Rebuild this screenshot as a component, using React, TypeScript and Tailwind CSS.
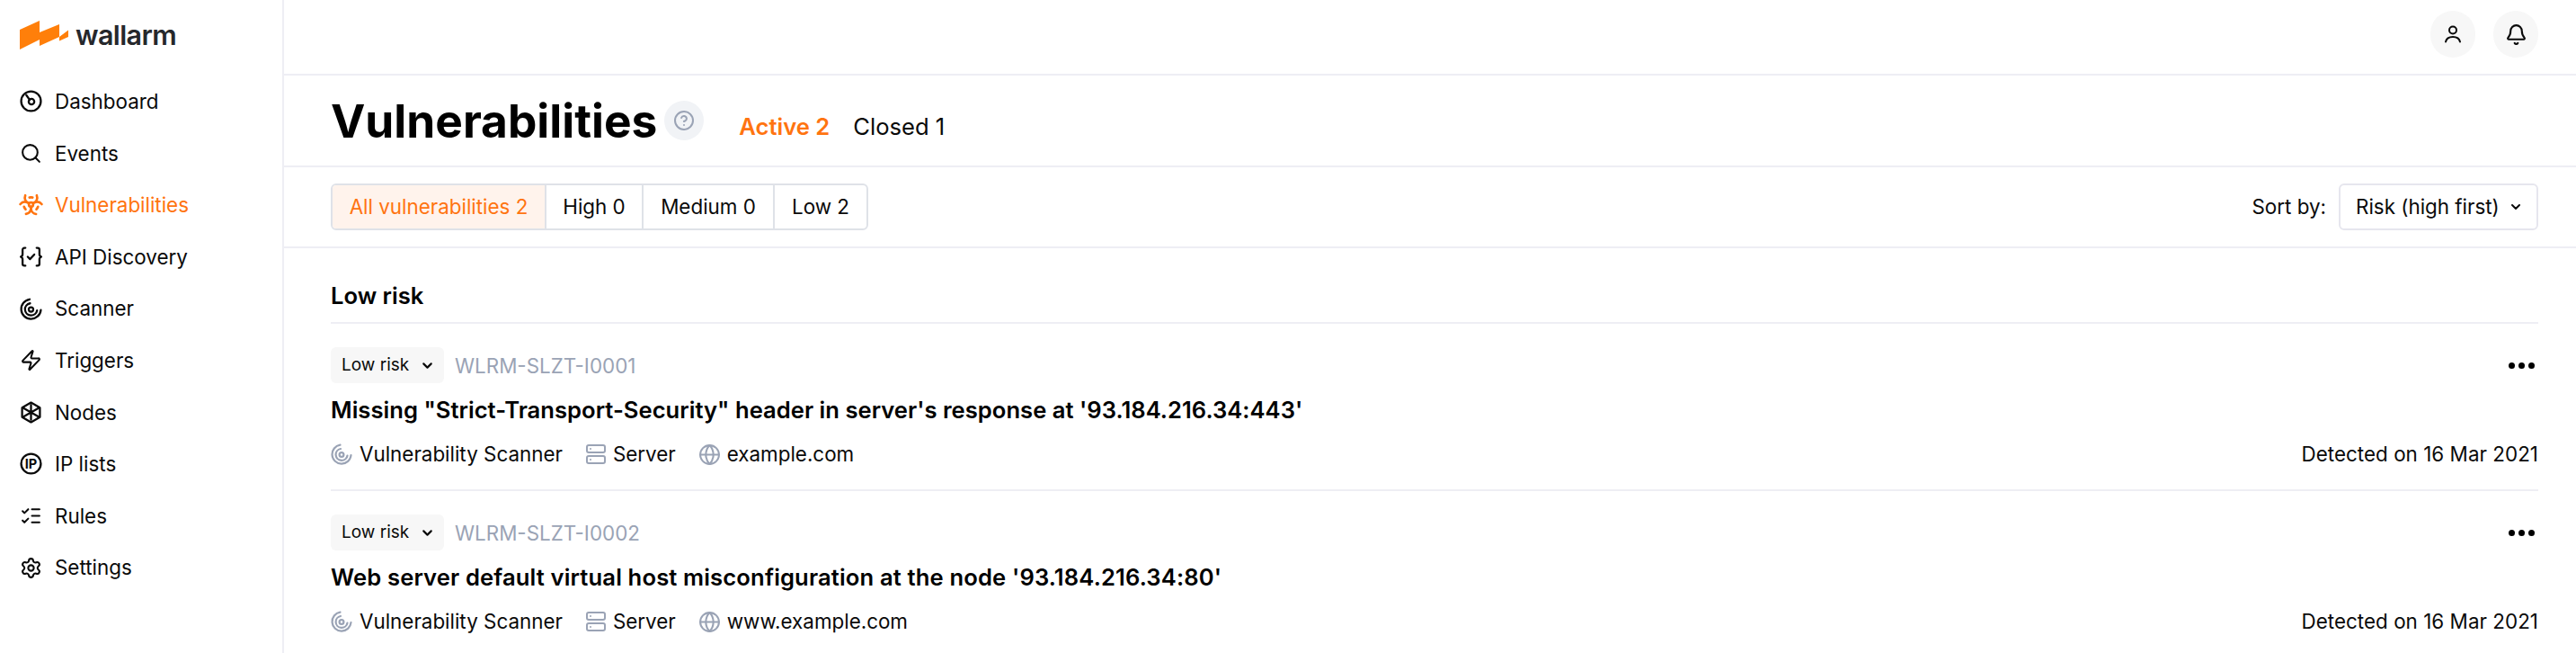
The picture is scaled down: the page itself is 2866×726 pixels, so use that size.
import React from "react";
import { Search, Biohazard, Zap, ListChecks, Settings, Bell, Server, Globe, CircleHelp, ChevronDown } from "lucide-react";

type P = { className?: string };
const base = { viewBox: "0 0 24 24", fill: "none", stroke: "currentColor", strokeWidth: 2, strokeLinecap: "round" as const, strokeLinejoin: "round" as const };

const Gauge = ({ className }: P) => (
  <svg {...base} strokeWidth={2.2} className={className}>
    <circle cx="12" cy="12" r="10.5" />
    <circle cx="12.5" cy="12.5" r="3" />
    <path d="M10.5 10.5 7 5.5" />
  </svg>
);
const ApiIcon = ({ className }: P) => (
  <svg {...base} strokeWidth={2.2} className={className}>
    <path d="M6 2.5H5a2 2 0 0 0-2 2V9a3 3 0 0 1-2 3 3 3 0 0 1 2 3v4.5a2 2 0 0 0 2 2h1" />
    <path d="M18 2.5h1a2 2 0 0 1 2 2V9a3 3 0 0 0 2 3 3 3 0 0 0-2 3v4.5a2 2 0 0 1-2 2h-1" />
    <path d="m8.5 12 2.5 2.5 4.5-5" />
  </svg>
);
const ScanIcon = ({ className }: P) => (
  <svg {...base} strokeWidth={2.2} className={className}>
    <path d="M22.5 13A10.5 10.5 0 1 1 10.500 1.700" />
    <path d="M18.500 13.500a6.500 6.500 0 1 1-7.500-7.500" />
    <circle cx="12" cy="12.500" r="2.400" />
  </svg>
);
const NodeIcon = ({ className }: P) => (
  <svg {...base} strokeWidth={2.2} className={className}>
    <path d="M12 1.500 21.500 7v10L12 22.500 2.500 17V7z" />
    <path d="M12 4v16M4 7.500l16 9M20 7.500l-16 9" />
  </svg>
);
const IpIcon = ({ className }: P) => (
  <svg {...base} strokeWidth={2.2} className={className}>
    <circle cx="12" cy="12" r="10.500" />
    <text x="12" y="17" textAnchor="middle" fontSize="14" fontWeight="700" fill="currentColor" stroke="none" fontFamily="Inter, sans-serif">IP</text>
  </svg>
);
const UserIcon = ({ className }: P) => (
  <svg {...base} className={className}>
    <circle cx="12" cy="7.500" r="4" />
    <path d="M4 20.500c.800-3.800 4-5.500 8-5.500s7.200 1.700 8 5.500" />
  </svg>
);
const BioIcon = ({ className }: P) => <Biohazard className={`${className} scale-[1.15]`} strokeWidth={2.2} />;

const nav = [
  { label: "Dashboard", Icon: Gauge },
  { label: "Events", Icon: Search },
  { label: "Vulnerabilities", Icon: BioIcon, active: true },
  { label: "API Discovery", Icon: ApiIcon },
  { label: "Scanner", Icon: ScanIcon },
  { label: "Triggers", Icon: Zap },
  { label: "Nodes", Icon: NodeIcon },
  { label: "IP lists", Icon: IpIcon },
  { label: "Rules", Icon: ListChecks },
  { label: "Settings", Icon: Settings },
];

const filters = [
  { label: "All vulnerabilities 2", w: "w-[236px]", active: true },
  { label: "High 0", w: "w-[108px]" },
  { label: "Medium 0", w: "w-[146px]" },
  { label: "Low 2", w: "w-[104px]" },
];

const Row = ({ id, title, host, track }: { id: string; title: string; host: string; track: string }) => (
  <div className="h-[186px] shrink-0 border-b-2 border-[#eeeef4] pt-[26px]">
    <div className="flex items-center justify-between">
      <div className="flex items-center gap-[12px]">
        <div className="flex h-[40px] w-[126px] items-center rounded-[6px] bg-[#f7f7f7] pl-[12px] text-[19px]">
          Low risk
          <ChevronDown className="ml-[12px] size-[17px]" strokeWidth={3} />
        </div>
        <span className="mt-[2px] text-[22.400px] text-[#9aa3b5]">{id}</span>
      </div>
      <div className="mr-[4px] flex gap-[4px]">
        <span className="size-[7px] rounded-full bg-black" />
        <span className="size-[7px] rounded-full bg-black" />
        <span className="size-[7px] rounded-full bg-black" />
      </div>
    </div>
    <div className={`mt-[12px] text-[25.600px] leading-[36px] font-semibold text-black ${track}`}>{title}</div>
    <div className="mt-[16px] flex items-center justify-between text-[22.400px] leading-[30px]">
      <div className="flex items-center">
        <ScanIcon className="size-[24px] text-[#9aa3b5]" />
        <span className="ml-[8px]">Vulnerability Scanner</span>
        <Server className="ml-[25px] size-[24px] text-[#9aa3b5]" strokeWidth={2} />
        <span className="ml-[7px]">Server</span>
        <Globe className="ml-[25px] size-[25px] text-[#9aa3b5]" strokeWidth={2} />
        <span className="ml-[7px]">{host}</span>
      </div>
      <span className="tracking-[0.04px]">Detected on 16 Mar 2021</span>
    </div>
  </div>
);

export default function App() {
  return (
    <div className="flex h-[726px] w-[2866px] overflow-hidden bg-white font-['Inter',sans-serif] text-[#0a0a0a]">
      <aside className="w-[316px] shrink-0 border-r-2 border-[#eeeef4] pl-[22px]">
        <div className="flex h-[84px] items-start pt-[20px]">
          <svg viewBox="0 0 54 32" className="mt-[3px] h-[32px] w-[54px] text-[#ff7f0a]" fill="currentColor">
            <path d="M0 10 22 0v13L44 4v14L54 10.500V18L44 22.500V18L22 28V21L0 32z" />
          </svg>
          <span className="ml-[8px] text-[30.500px] leading-[38px] font-semibold tracking-[-0.6px] text-[#26282c]">wallarm</span>
        </div>
        <nav className="flex flex-col">
          {nav.map(({ label, Icon, active }) => (
            <div key={label} className={`flex h-[57.600px] items-center gap-[14px] text-[22.400px] ${active ? "text-[#ff7410]" : ""}`}>
              <Icon className="size-[25px]" />
              <span>{label}</span>
            </div>
          ))}
        </nav>
      </aside>
      <main className="flex min-w-0 flex-1 flex-col">
        <header className="flex h-[84px] shrink-0 items-start justify-end gap-[20px] border-b-2 border-[#eeeef4] pt-[12px] pr-[42px]">
          <div className="flex h-[52px] w-[50px] items-center justify-center rounded-full bg-[#f7f7f7]">
            <UserIcon className="size-[24px]" />
          </div>
          <div className="flex h-[52px] w-[50px] items-center justify-center rounded-full bg-[#f7f7f7]">
            <Bell className="size-[25px]" />
          </div>
        </header>
        <div className="flex h-[102px] shrink-0 items-center border-b-2 border-[#eeeef4] pl-[52px]">
          <h1 className="text-[51.400px] leading-[60px] font-bold text-black">Vulnerabilities</h1>
          <div className="ml-[8px] flex size-[44px] items-center justify-center rounded-full bg-[#f1f3f6]">
            <CircleHelp className="size-[24px] text-[#9aa3b5]" />
          </div>
          <span className="mt-[14px] ml-[39px] text-[25.600px] font-semibold text-[#ff7410]">Active 2</span>
          <span className="mt-[14px] ml-[26px] text-[25.600px]">Closed 1</span>
        </div>
        <div className="flex h-[90px] shrink-0 items-center justify-between border-b-2 border-[#eeeef4] pr-[42px] pl-[52px]">
          <div className="flex h-[52px] overflow-hidden rounded-[6px] border-2 border-[#dfe2e8]">
            {filters.map((f, i) => (
              <div key={f.label} className={`flex items-center justify-center text-[22.400px] ${f.w} ${i ? "border-l-2 border-[#dfe2e8]" : ""} ${f.active ? "bg-[#fff3ec] text-[#ff7410]" : ""}`}>
                {f.label}
              </div>
            ))}
          </div>
          <div className="flex items-center gap-[14px] text-[22.400px]">
            <span>Sort by:</span>
            <div className="flex h-[52px] w-[222px] items-center justify-between rounded-[6px] border-2 border-[#e6e6ee] pr-[15px] pl-[17px]">
              Risk (high first)
              <ChevronDown className="size-[16px]" strokeWidth={3} />
            </div>
          </div>
        </div>
        <div className="flex min-h-0 flex-1 flex-col pr-[42px] pl-[52px]">
          <div className="h-[84px] shrink-0 border-b-2 border-[#eeeef4] pt-[36px] text-[25.600px] leading-[34px] font-semibold text-black">Low risk</div>
          <Row id="WLRM-SLZT-I0001" track="tracking-[0.02px]" title={`Missing "Strict-Transport-Security" header in server's response at '93.184.216.34:443'`} host="example.com" />
          <Row id="WLRM-SLZT-I0002" track="tracking-[0.14px]" title="Web server default virtual host misconfiguration at the node '93.184.216.34:80'" host="www.example.com" />
        </div>
      </main>
    </div>
  );
}
